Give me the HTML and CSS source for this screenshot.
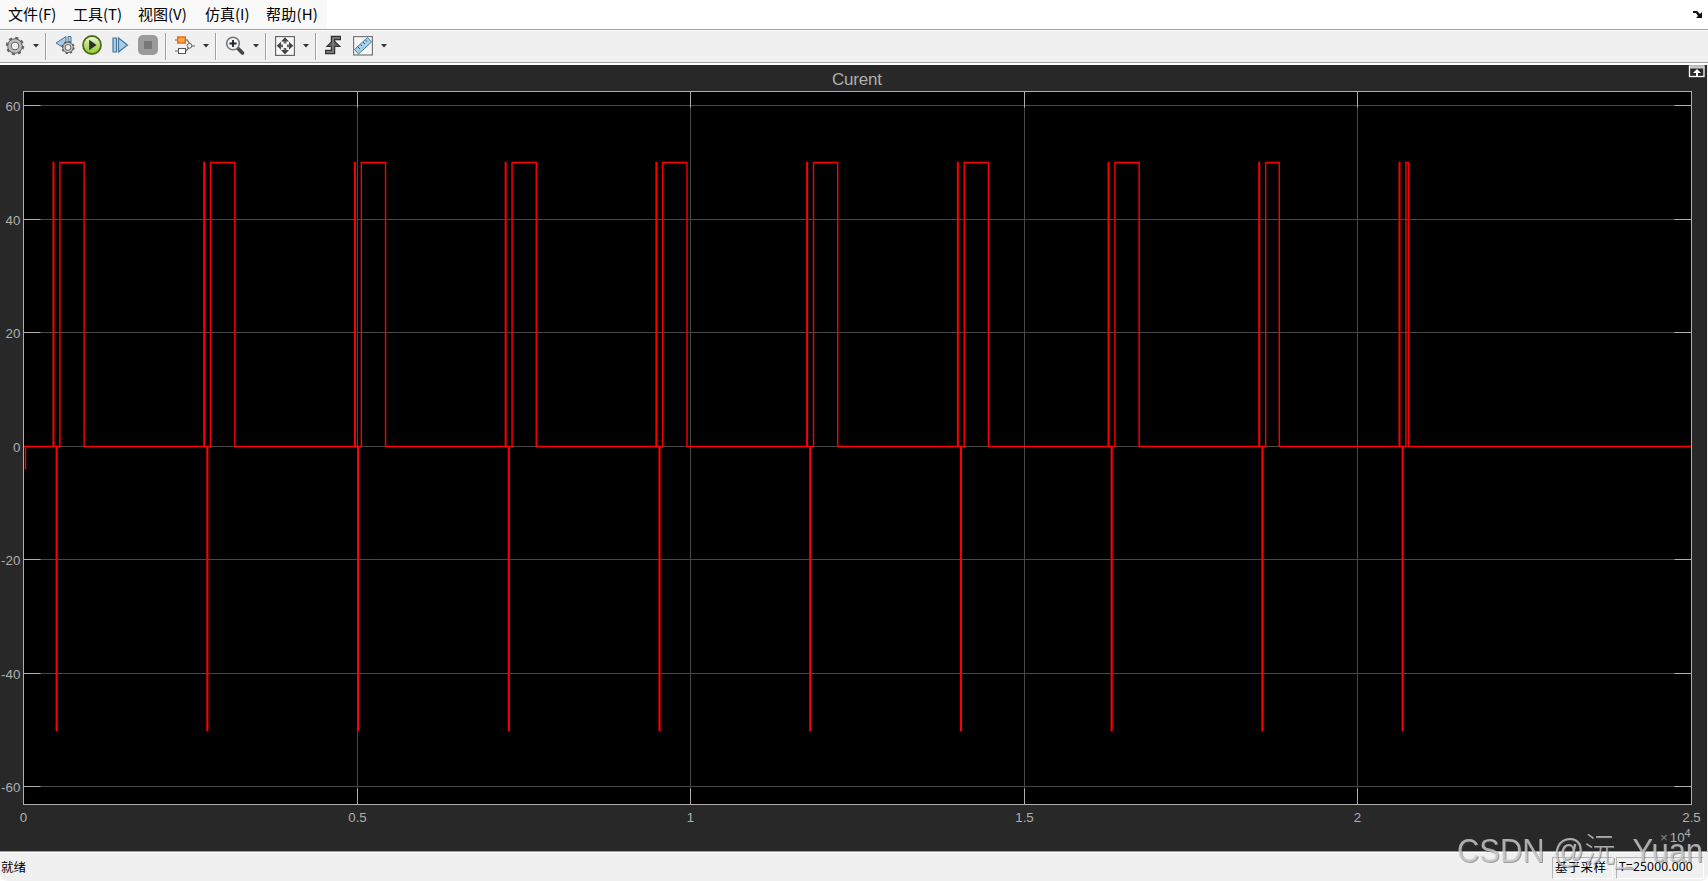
FILE: index.html
```html
<!DOCTYPE html>
<html lang="zh-CN">
<head>
  <meta charset="UTF-8" />
  <title>Curent</title>
  <link rel="stylesheet" href="styles.css">
</head>
<body>

  <div class="window">
    <!-- Menu -->
    <nav class="menubar">
      <div class="menu-items">
        <span>文件(F)</span>
        <span>工具(T)</span>
        <span>视图(V)</span>
        <span>仿真(I)</span>
        <span>帮助(H)</span>
      </div>
      <svg class="dock" width="10" height="8" viewBox="0 0 10 8">
        <path d="M0 1h4l3 3 2-2v6H3l2-2-2-3H0z" fill="#111"/>
      </svg>
    </nav>

    <!-- Toolbar -->
    <div class="toolbar">
      <svg class="tool first" viewBox="0 0 20 20">
        <circle cx="10" cy="11" r="8" fill="none" stroke="#666" stroke-width="2.4" stroke-dasharray="3.1 3.18"/>
        <circle cx="10" cy="11" r="5.5" fill="#eee" stroke="#666" stroke-width="4.6"/>
        <circle cx="10" cy="11" r="5.5" fill="none" stroke="#bdbdbd" stroke-width="2.6"/>
      </svg>
      <svg class="arrow" viewBox="0 0 8 4"><path d="M1 0h6L4 3.4z"/></svg>
      <i class="sep"></i>

      <svg class="tool" viewBox="0 0 20 20">
        <path d="M11 1.5v13L1 8z" fill="#a9c9e4" stroke="#47769d"/>
        <path d="M13 1.5h3V8h-3z" fill="#a9c9e4" stroke="#47769d"/>
        <circle cx="13" cy="12.5" r="5.7" fill="none" stroke="#555" stroke-width="1.8" stroke-dasharray="2.2 2.27"/>
        <circle cx="13" cy="12.5" r="4" fill="#eee" stroke="#5c5c5c" stroke-width="3.2"/>
        <circle cx="13" cy="12.5" r="4" fill="none" stroke="#c8c8c8" stroke-width="1.6"/>
      </svg>
      <svg class="tool" viewBox="0 0 20 20">
        <defs>
          <linearGradient id="green" x1="0" y1="0" x2="0" y2="1">
            <stop offset="0" stop-color="#f2fae0"/>
            <stop offset=".5" stop-color="#b9dd75"/>
            <stop offset="1" stop-color="#91cc35"/>
          </linearGradient>
        </defs>
        <circle cx="9" cy="10" r="9" fill="url(#green)" stroke="#4c6d1c" stroke-width="1.8"/>
        <path d="M6.2 4.8v10.4l7.3-5.2z" fill="#2d302a"/>
      </svg>
      <svg class="tool" viewBox="0 0 20 20">
        <path d="M2 3h3.500v14H2zM7.500 3v14l9-7z" fill="#a9cdea" stroke="#47769d" stroke-width="1.2"/>
      </svg>
      <svg class="tool" viewBox="0 0 20 20">
        <rect x="-1" y="0" width="20" height="20" rx="5" fill="#9b9b9b"/>
        <rect x="5" y="6" width="8" height="8" fill="#777"/>
      </svg>
      <i class="sep wide"></i>

      <svg class="tool" viewBox="0 0 20 20">
        <path d="M12 5l3 4M0 16h11l3.500-4M16 11h4" fill="none" stroke="#666" stroke-width="1.2"/>
        <path d="M0 5h13" stroke="#d56a1c" stroke-width="1.3"/>
        <rect x="2.700" y="2" width="7.600" height="6" fill="#ffa64d" stroke="#dd6b16" stroke-width="1.4"/>
        <rect x="3.500" y="13.500" width="7" height="5" fill="#fff" stroke="#555"/>
        <circle cx="14.500" cy="10.800" r="2.400" fill="#eee" stroke="#666"/>
      </svg>
      <svg class="arrow" viewBox="0 0 8 4"><path d="M1 0h6L4 3.4z"/></svg>
      <i class="sep"></i>

      <svg class="tool" viewBox="0 0 20 20">
        <path d="M12.5 13l5 5" stroke="#444" stroke-width="3.6" stroke-linecap="round"/>
        <circle cx="8" cy="8.5" r="6.3" fill="#eef6fa" stroke="#777" stroke-width="1.6"/>
        <path d="M4.5 8.5h7M8 5v7" stroke="#222" stroke-width="1.8"/>
      </svg>
      <svg class="arrow" viewBox="0 0 8 4"><path d="M1 0h6L4 3.4z"/></svg>
      <i class="sep"></i>

      <svg class="tool" viewBox="0 0 20 20">
        <rect x=".6" y="1.6" width="18.8" height="18.8" fill="#fafafa" stroke="#666" stroke-width="1.2"/>
        <path d="M10 2.200l4 4.300H6zM10 19.400l4-4.300H6zM1.700 10.800l4.300-4v8zM18.300 10.800l-4.300-4v8z" fill="#444"/>
        <path d="M10 6v2.500M10 13v2.500M5.500 10.800H8M12 10.800h2.500" stroke="#666" stroke-width="2.800"/>
      </svg>
      <svg class="arrow" viewBox="0 0 8 4"><path d="M1 0h6L4 3.4z"/></svg>
      <i class="sep"></i>

      <svg class="tool" viewBox="0 0 20 20">
        <path d="M0 17h8V3h8" fill="none" stroke="#333" stroke-width="4.500"/>
        <path d="M2 11.500L8.300 5l6.500 6.500z" fill="#666" stroke="#333" stroke-width="1.200"/>
        <path d="M1 17h7V3h7" fill="none" stroke="#777" stroke-width="2"/>
      </svg>
      <svg class="tool" viewBox="0 0 20 20">
        <rect x=".6" y="1.6" width="18.8" height="18.4" fill="#f7f7f7" stroke="#777" stroke-width="1.2"/>
        <path d="M1.500 14.500L14.500 2.500l4 4.500L5.500 19z" fill="#a5cfe9" stroke="#4e7f9f"/>
        <path d="M5 12l2 2M7.500 9.500l1.500 1.500M10 7l2 2M12.500 5l1.500 1.500" stroke="#335a75"/>
      </svg>
      <svg class="arrow" viewBox="0 0 8 4"><path d="M1 0h6L4 3.4z"/></svg>
    </div>

    <!-- Scope display -->
    <main class="scope">
      <svg class="plot" width="1707" height="786" viewBox="0 65 1707 786">
        <rect x="23.5" y="91.5" width="1668" height="713" class="axes"/>
        <g id="grid"></g>
        <path id="signal" class="signal"/>
        <rect x="23.5" y="91.5" width="1668" height="713" class="frame"/>
        <g id="ticks"></g>
        <text x="832" y="85" class="title" textLength="50">Curent</text>
        <text x="1660" y="842" class="exponent"><tspan class="times">×</tspan><tspan dx="2">10</tspan><tspan dy="-5" class="power">4</tspan></text>
        <g class="maximize">
          <rect x="1689.5" y="66" width="14.5" height="10.5"/>
          <path d="M1690 67.5h14" class="bar"/>
          <path d="M1697 69l4 4h-3v3h-2v-3h-3z" class="up"/>
        </g>
      </svg>
    </main>

    <!-- Status -->
    <footer class="statusbar">
      <span class="ready">就绪</span>
      <span class="cell mode">基于采样</span>
      <span class="cell time">T=25000.000</span>
    </footer>

    <svg class="watermark" width="260" height="54" viewBox="0 0 260 54">
      <text x="9" y="36" textLength="246" lengthAdjust="spacingAndGlyphs">CSDN @沅_Yuan</text>
    </svg>
  </div>

  <script>
    const LEFT = 23.5, RIGHT = 1691.5, TOP = 91.5, BOTTOM = 804.5;
    const ZERO = 446.5, HIGH = 162.5, LOW = 730.5;

    const grid = document.getElementById('grid');
    const ticks = document.getElementById('ticks');
    let lines = '', marks = '', labels = '';

    const rows = [[60, 105.5], [40, 219.5], [20, 332.5], [0, 446.5], [-20, 559.5], [-40, 673.5], [-60, 786.5]];
    rows.forEach(([value, y]) => {
      lines += `M${LEFT} ${y}H${RIGHT}`;
      if (value !== 0) marks += `M${LEFT} ${y}h17M${RIGHT} ${y}h-17`;
      labels += `<text x="20.3" y="${y + 5.5}" class="label y">${value}</text>`;
    });

    const columns = [[0, 23.5], [0.5, 357.5], [1, 690.5], [1.5, 1024.5], [2, 1357.5], [2.5, 1691.5]];
    columns.forEach(([value, x]) => {
      lines += `M${x} ${TOP}V${BOTTOM}`;
      marks += `M${x} ${TOP}v16M${x} ${BOTTOM}v-16`;
      labels += `<text x="${x}" y="822" class="label x">${value}</text>`;
    });

    grid.innerHTML = `<path d="${lines}" class="gridline"/>`;
    ticks.innerHTML = `<path d="${marks}" class="tick"/>${labels}`;

    // start of each cycle and width of its charge pulse
    const cycles = [];
    for (let i = 0; i < 9; i++) {
      cycles.push([53.5 + i * 150.72, i === 8 ? 13.6 : 24.2]);
    }
    cycles.push([1399.5, 2.6]);

    let d = `M${LEFT} ${ZERO}H25.5V469.5V${ZERO}`;
    cycles.forEach(([x, width]) => {
      d += `H${x - 0.3}V${HIGH}H${x + 0.3}V${ZERO}`;
      d += `H${x + 2.8}V${LOW}H${x + 3.5}V${ZERO}`;
      d += `H${x + 6.4}V${HIGH}h${width}V${ZERO}`;
    });
    d += `H${RIGHT}`;
    document.getElementById('signal').setAttribute('d', d);
  </script>

</body>
</html>
```
FILE: styles.css
```css
* {
  margin: 0;
  padding: 0;
  box-sizing: border-box;
}

body {
  background: #fff;
  overflow: hidden;
  font-family: "Noto Sans CJK SC", sans-serif;
}

.window {
  position: relative;
  width: 1708px;
  height: 881px;
  display: flex;
  flex-direction: column;
}

.menubar {
  height: 29px;
  display: flex;
  justify-content: space-between;
  background: #fff;
}

.menu-items {
  display: flex;
  width: 327px;
  padding-left: 8px;
  background: #f9f9f9;
  color: #000;
  font-size: 15px;
  line-height: 27px;
}

.menu-items span {
  width: 65px;
  flex: none;
  white-space: nowrap;
}

.menu-items span:nth-child(3) {
  width: 67px;
}

.menu-items span:nth-child(4) {
  width: 61px;
}

.menu-items span:nth-child(5) {
  width: 58px;
  letter-spacing: 0.2px;
}

.dock {
  margin: 10px 5px 0 0;
}

.toolbar {
  height: 36px;
  display: flex;
  align-items: center;
  background: #f0f0f0;
  border-top: 1px solid #a0a0a0;
  border-bottom: 2px solid #fff;
  box-shadow: inset 0 1px #fff, inset 0 -1px #a0a0a0;
}

.tool {
  width: 20px;
  height: 20px;
  margin: 0 0 3px 8px;
  overflow: visible;
  flex: none;
}

.tool.first {
  margin-left: 5px;
}

.arrow {
  width: 8px;
  height: 4px;
  margin: 0 0 2px 7px;
  fill: #333;
}

.sep {
  width: 2px;
  height: 27px;
  margin-left: 5px;
  background: #a0a0a0;
  border-right: 1px solid #fff;
}

.sep.wide {
  margin-left: 6px;
}

.scope {
  height: 786px;
  background: #282828;
  border-right: 1px solid #f0f0f0;
}

.plot {
  display: block;
  font-family: "Liberation Sans", Arial, sans-serif;
}

.axes {
  fill: #000;
}

.frame {
  fill: none;
  stroke: #afafaf;
}

.gridline {
  stroke: #484848;
}

.tick {
  stroke: #afafaf;
}

.signal {
  fill: none;
  stroke: #f00;
  stroke-width: 1.4;
}

.title {
  fill: #afafaf;
  font-size: 17px;
}

.label,
.exponent {
  fill: #afafaf;
  font-size: 13.3px;
}

.label.y {
  text-anchor: end;
}

.label.x {
  text-anchor: middle;
}

.times {
  fill: #888;
}

.power {
  font-size: 11px;
}

.maximize rect {
  fill: #282828;
  stroke: #fff;
  stroke-width: 1.3;
}

.maximize .bar {
  stroke: #ccc;
  stroke-width: 2;
}

.maximize .up {
  fill: #fff;
}

.statusbar {
  height: 30px;
  display: flex;
  align-items: flex-end;
  padding: 0 4px 2px 1px;
  background: #f0f0f0;
  border-top: 1px solid #a0a0a0;
  box-shadow: inset 0 1px #fff;
  color: #000;
  font-size: 12.5px;
  line-height: 18px;
  border-radius: 0 0 8px 8px;
}

.ready {
  margin-right: auto;
  padding-bottom: 3px;
}

.cell {
  height: 22px;
  border: 1px solid #fff;
  border-top-color: #b4b4b4;
  border-left-color: #b4b4b4;
  padding-left: 2px;
  white-space: nowrap;
}

.mode {
  width: 61px;
  margin-right: 3px;
  letter-spacing: 0.3px;
}

.time {
  width: 88px;
  font-family: "Noto Sans", sans-serif;
  font-size: 12px;
  letter-spacing: 0.2px;
}

/* overlay in the bottom right corner */
.watermark {
  position: absolute;
  right: 0;
  bottom: 1px;
  overflow: visible;
  filter: drop-shadow(1px 1px 0.5px rgba(70, 70, 70, 0.6));
}

.watermark text {
  font-family: "Liberation Sans", "Noto Sans CJK SC", sans-serif;
  font-size: 34px;
  font-weight: 300;
  fill: rgba(205, 205, 205, 0.8);
}
```
